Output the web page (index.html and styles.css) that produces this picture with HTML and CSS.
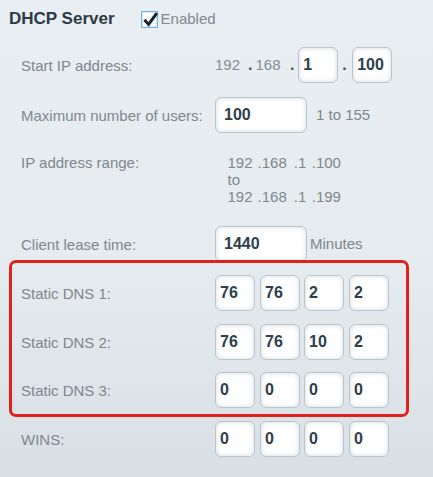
FILE: index.html
```html
<!DOCTYPE html>
<html>
<head>
<meta charset="utf-8">
<link rel="stylesheet" href="styles.css">
</head>
<body>
<div class="header">
  <span class="title">DHCP Server</span>
  <span class="check"><svg width="17" height="17" viewBox="0 0 17 17" overflow="visible"><rect x="0.5" y="0.5" width="16" height="16" fill="#fff" stroke="#74b4dc"/><rect x="1.5" y="1.5" width="14" height="14" fill="none" stroke="#d4e8f4"/><path d="M3.4 8.8 L7.6 13.4 L15.8 2.2" fill="none" stroke="#17222c" stroke-width="3" stroke-linejoin="miter"/></svg></span>
  <span class="check-label">Enabled</span>
</div>
<div class="form">
  <div class="row">
    <div class="label">Start IP address:</div>
    <div class="field">
      <span class="fixed">192</span><span class="dot d1">.</span><span class="fixed f2">168</span><span class="dot d2">.</span><input class="box b1" type="text" value="1"><span class="dot d3">.</span><input class="box b2" type="text" value="100">
    </div>
  </div>
  <div class="row row-users">
    <div class="label">Maximum number of users:</div>
    <div class="field">
      <input class="box wide" type="text" value="100"><span class="hint">1 to 155</span>
    </div>
  </div>
  <div class="row row-range">
    <div class="label">IP address range:</div>
    <div class="range">
      <div class="range-line"><span>192</span><span class="r2">.168</span><span class="r3">.1</span><span class="r4">.100</span></div>
      <div class="range-line">to</div>
      <div class="range-line"><span>192</span><span class="r2">.168</span><span class="r3">.1</span><span class="r4">.199</span></div>
    </div>
  </div>
  <div class="row row-lease">
    <div class="label">Client lease time:</div>
    <div class="field">
      <input class="box wide" type="text" value="1440"><span class="unit">Minutes</span>
    </div>
  </div>
  <div class="dns">
    <div class="row">
      <div class="label">Static DNS 1:</div>
      <div class="quad">
        <input class="box" type="text" value="76"><input class="box" type="text" value="76"><input class="box" type="text" value="2"><input class="box" type="text" value="2">
      </div>
    </div>
    <div class="row row-dns2">
      <div class="label">Static DNS 2:</div>
      <div class="quad">
        <input class="box" type="text" value="76"><input class="box" type="text" value="76"><input class="box" type="text" value="10"><input class="box" type="text" value="2">
      </div>
    </div>
    <div class="row row-dns3">
      <div class="label">Static DNS 3:</div>
      <div class="quad">
        <input class="box" type="text" value="0"><input class="box" type="text" value="0"><input class="box" type="text" value="0"><input class="box" type="text" value="0">
      </div>
    </div>
  </div>
  <div class="row row-wins">
    <div class="label">WINS:</div>
    <div class="quad">
      <input class="box" type="text" value="0"><input class="box" type="text" value="0"><input class="box" type="text" value="0"><input class="box" type="text" value="0">
    </div>
  </div>
</div>
</body>
</html>
```
FILE: styles.css
```css
html {
  height: 100%;
}
body {
  margin: 0;
  min-height: 100%;
  background: linear-gradient(to bottom, #e8eef1 0%, #e5ebef 55%, #d9e0e5 100%);
  font-family: "Liberation Sans", Arial, sans-serif;
  overflow: hidden;
}
.header {
  display: flex;
  align-items: center;
  height: 20px;
  padding: 9px 0 0 9px;
}
.title {
  font-size: 17px;
  font-weight: bold;
  color: #2c3a46;
  line-height: 20px;
}
.check {
  display: block;
  flex: none;
  width: 17px;
  height: 17px;
  margin-left: 26px;
  margin-top: 1px;
}
.check svg {
  display: block;
}
.check-label {
  font-size: 15px;
  line-height: 20px;
  color: #7f8990;
  margin-left: 3px;
}
.form {
  padding: 18px 0 0 21px;
}
.row {
  display: flex;
  align-items: center;
  height: 36px;
}
.row-users {
  margin-top: 14px;
}
.row-range {
  margin-top: 21px;
  height: auto;
  align-items: flex-start;
}
.row-lease {
  margin-top: 21px;
}
.row-dns2 {
  margin-top: 13px;
}
.row-dns3 {
  margin-top: 12px;
}
.row-wins {
  margin-top: 13px;
}
.label {
  flex: none;
  width: 194px;
  font-size: 15px;
  line-height: 17px;
  color: #7e878d;
}
.box {
  box-sizing: border-box;
  flex: none;
  width: 40px;
  min-width: 40px;
  height: 36px;
  margin: 0;
  padding: 0 0 0 4px;
  border: 1px solid #b8c5c9;
  border-radius: 6px;
  background: #fff;
  box-shadow: inset 0 0 5px rgba(130, 150, 162, 0.35);
  font-family: "Liberation Sans", Arial, sans-serif;
  font-size: 16px;
  font-weight: bold;
  color: #2e3e4b;
  outline: none;
}
.box.wide {
  width: 92px;
  min-width: 92px;
  padding-left: 8px;
}
.field {
  display: flex;
  flex: none;
  align-items: center;
  font-size: 15px;
  line-height: 20px;
  color: #7e878d;
}
.field > * {
  flex: none;
}
.fixed {
  color: #848c92;
}
.field .f2 {
  margin-left: 3px;
}
.dot {
  font-size: 16px;
  font-weight: bold;
  color: #4a5660;
  line-height: 20px;
}
.field .d1 {
  margin-left: 8px;
}
.field .d2 {
  margin-left: 9.6px;
}
.field .d3 {
  margin-left: 4px;
}
.field .b1 {
  margin-left: 3.6px;
}
.field .b2 {
  margin-left: 5.6px;
}
.hint {
  margin-left: 9px;
}
.unit {
  margin-left: 3px;
}
.range {
  margin-left: 12.5px;
  font-size: 15px;
  line-height: 17px;
  color: #7e878d;
}
.range-line {
  display: flex;
}
.r2 {
  margin-left: 5px;
}
.r3 {
  margin-left: 7px;
}
.r4 {
  margin-left: 5.5px;
}
.quad {
  display: flex;
  flex: none;
}
.quad .box + .box {
  margin-left: 5px;
}
.quad .box:nth-child(3) {
  margin-left: 4px;
}
.dns {
  position: relative;
  margin-top: 13px;
}
.dns::after {
  content: "";
  position: absolute;
  left: -12px;
  top: -15px;
  width: 400px;
  height: 157px;
  box-sizing: border-box;
  border: 3px solid #e3201a;
  border-radius: 7px;
  pointer-events: none;
}
```
